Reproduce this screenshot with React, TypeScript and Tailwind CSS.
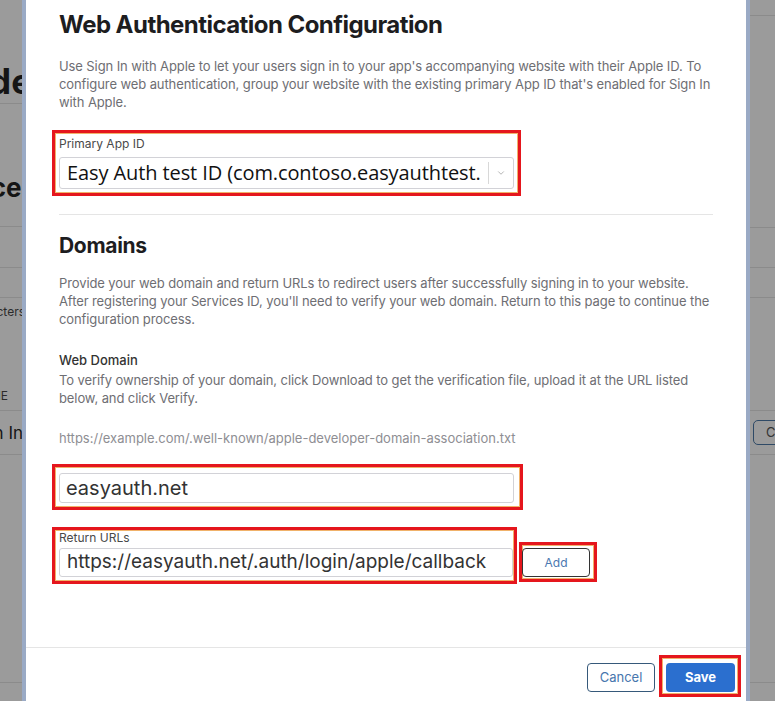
import { ChevronDown } from 'lucide-react';

// red annotation frame drawn around the highlighted fields
const redBox = 'border-[3px] border-[#e5161d] shadow-[inset_0_0_0_1px_#f0b26a]';

function LeftStrip() {
  return (
    <div className="w-[22px] flex flex-col text-[#151515]">
      <div className="h-[104px] border-b border-[#8b8b8b] flex justify-end items-end overflow-hidden pb-[4px]">
        <span className="whitespace-nowrap text-[35px] leading-[35px] font-bold -mr-[10px]">Code</span>
      </div>
      <div className="h-[123px] border-b border-[#8b8b8b] flex justify-end overflow-hidden pt-[70px]">
        <span className="whitespace-nowrap text-[26px] leading-[28px] font-bold -mr-[14px]">Services</span>
      </div>
      <div className="h-[41px] border-b border-[#8b8b8b]" />
      <div className="h-[30px] border-b border-[#8b8b8b]" />
      <div className="h-[113px] border-b border-[#8b8b8b] flex flex-col overflow-hidden pt-[6px] text-[#2b2b2b]">
        <div className="flex justify-end">
          <span className="whitespace-nowrap text-[12px] leading-[16px] -mr-[3px]">characters</span>
        </div>
        <div className="mt-[68px] flex justify-end">
          <span className="whitespace-nowrap text-[12px] leading-[16px] mr-[14px]">NAME</span>
        </div>
      </div>
      <div className="h-[44px] border-b border-[#8b8b8b] flex justify-end items-center overflow-hidden">
        <span className="whitespace-nowrap text-[17px] leading-[22px] -mr-[1px]">Sign In</span>
      </div>
      <div className="h-[228px] border-b border-[#8b8b8b]" />
    </div>
  );
}

function RightStrip() {
  return (
    <div className="w-[25px] flex flex-col">
      <div className="h-[16px] border-b border-[#8b8b8b]" />
      <div className="h-[212px] border-b border-[#8b8b8b]" />
      <div className="h-[40px] border-b border-[#8b8b8b]" />
      <div className="h-[30px] border-b border-[#8b8b8b]" />
      <div className="h-[113px] border-b border-[#8b8b8b]" />
      <div className="h-[44px] border-b border-[#8b8b8b] flex items-center overflow-hidden pl-[3px]">
        <div className="h-[25px] shrink-0 border border-[#2f4a66] rounded-[5px] pl-[12px] pr-[12px] flex items-center text-[13px] text-[#333]">
          Change
        </div>
      </div>
      <div className="h-[228px] border-b border-[#8b8b8b]" />
    </div>
  );
}

function ConfigModal() {
  return (
    <div className="absolute left-[22px] top-0 w-[728px] h-[701px] bg-white border-x-4 border-[#9aaac5] flex flex-col">
      <div className="px-[33px] pt-[10px] flex flex-col">
        <h1 className="text-[24px] leading-[30px] font-bold text-[#1d1d1f] tracking-[-0.55px]">
          Web Authentication Configuration
        </h1>
        <p className="mt-[17px] text-[13px] leading-[18px] text-[#6e6e73] whitespace-nowrap tracking-[-0.1px]">
          Use Sign In with Apple to let your users sign in to your app's accompanying website with their Apple ID. To
          <br />
          configure web authentication, group your website with the existing primary App ID that's enabled for Sign In
          <br />
          with Apple.
        </p>

        <div className={`mt-[19px] -ml-[7px] w-[469px] pl-[4px] pr-[4px] pt-[3px] pb-[4px] ${redBox}`}>
          <div className="text-[12px] leading-[16px] text-[#494949]">Primary App ID</div>
          <div className="mt-[5px] h-[32px] border border-[#d2d2d7] rounded-[3px] flex items-center bg-white">
            <div className="flex-1 overflow-hidden whitespace-nowrap pl-[7px] text-[20px] leading-[30px] text-[#111] font-['Open_Sans',sans-serif] tracking-[-0.1px]">
              Easy Auth test ID (com.contoso.easyauthtest.
            </div>
            <div className="w-px h-[22px] bg-[#d8d8d8]" />
            <div className="w-[24px] flex justify-center text-[#888]">
              <ChevronDown size={10} strokeWidth={1.5} />
            </div>
          </div>
        </div>

        <div className="mt-[18px] h-px bg-[#e5e5e5]" />

        <h2 className="mt-[18px] text-[21px] leading-[26px] font-bold text-[#1d1d1f] tracking-[-0.3px]">Domains</h2>
        <p className="mt-[15px] text-[13px] leading-[18px] text-[#6e6e73] whitespace-nowrap tracking-[-0.1px]">
          Provide your web domain and return URLs to redirect users after successfully signing in to your website.
          <br />
          After registering your Services ID, you'll need to verify your web domain. Return to this page to continue the
          <br />
          configuration process.
        </p>

        <div className="mt-[23px] text-[13px] leading-[18px] font-medium text-[#333]">Web Domain</div>
        <p className="mt-[2px] text-[13px] leading-[18px] text-[#6e6e73] whitespace-nowrap tracking-[-0.1px]">
          To verify ownership of your domain, click Download to get the verification file, upload it at the URL listed
          <br />
          below, and click Verify.
        </p>
        <div className="mt-[22px] text-[13px] leading-[18px] text-[#8e8e93]">
          https://example.com/.well-known/apple-developer-domain-association.txt
        </div>

        <div className={`mt-[17px] -ml-[7px] w-[471px] pl-[4px] pr-[6px] pt-[6px] pb-[4px] ${redBox}`}>
          <div className="h-[30px] border border-[#d2d2d7] rounded-[3px] flex items-center pl-[6px] text-[20px] text-[#333]">
            easyauth.net
          </div>
        </div>

        <div className="mt-[17px] flex items-start">
          <div className={`-ml-[7px] w-[465px] pl-[4px] pr-[1px] pb-[4px] ${redBox}`}>
            <div className="text-[12px] leading-[16px] text-[#494949]">Return URLs</div>
            <div className="mt-[2px] h-[29px] border border-[#d2d2d7] rounded-[3px] flex items-center pl-[7px] text-[19px] text-[#333] whitespace-nowrap overflow-hidden">
              https://easyauth.net/.auth/login/apple/callback
            </div>
          </div>
          <div className={`ml-[2px] mt-[15px] w-[78px] pr-[4px] pt-[3px] pb-[2px] ${redBox}`}>
            <button className="w-[68px] h-[29px] border border-[#333] rounded-[4px] text-[12px] text-[#4a78b0]">
              Add
            </button>
          </div>
        </div>
      </div>

      <div className="mt-[63px] border-t border-[#e5e5e5] flex justify-end items-start pr-[5px] pt-[7px]">
        <button className="mt-[8px] w-[68px] h-[29px] border border-[#36597a] rounded-[4px] text-[13px] text-[#4776ad]">
          Cancel
        </button>
        <div className={`ml-[4px] pl-[4px] pr-[3px] pt-[5px] pb-[2px] ${redBox}`}>
          <button className="w-[69px] h-[29px] bg-[#2b6fcf] rounded-[4px] text-[13px] font-bold text-white">
            Save
          </button>
        </div>
      </div>
    </div>
  );
}

export default function App() {
  return (
    <div className="relative w-[775px] h-[701px] overflow-hidden bg-[#9b9b9b] font-['Inter','Liberation_Sans',sans-serif]">
      <div className="flex justify-between h-full">
        <LeftStrip />
        <RightStrip />
      </div>
      <ConfigModal />
    </div>
  );
}
